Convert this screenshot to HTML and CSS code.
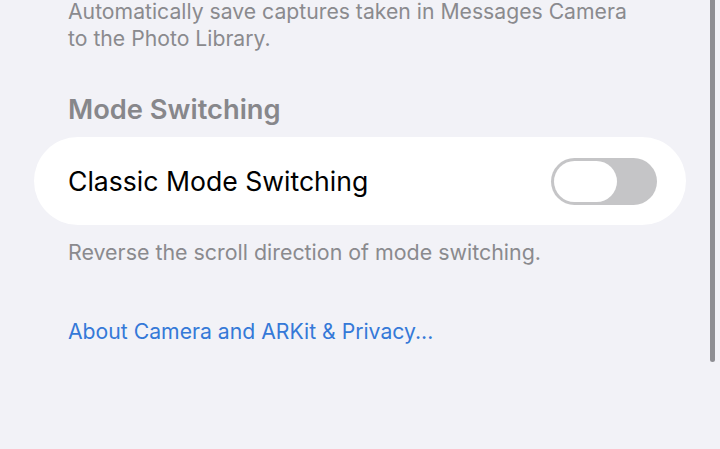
FILE: index.html
```html
<!DOCTYPE html>
<html lang="en">
<head>
<meta charset="utf-8">
<link rel="stylesheet" href="styles.css">
</head>
<body>
<div class="page">
  <p class="desc">Automatically save captures taken in Messages Camera<br>to the Photo Library.</p>
  <h2 class="section-title">Mode Switching</h2>
  <div class="card">
    <span class="row-label">Classic Mode Switching</span>
    <span class="toggle"><span class="knob"></span></span>
  </div>
  <p class="footer">Reverse the scroll direction of mode switching.</p>
  <a class="link" href="#">About Camera and ARKit &amp; Privacy...</a>
</div>
<div class="scrollbar"></div>
</body>
</html>
```
FILE: styles.css
```css
html, body {
  margin: 0;
  padding: 0;
  background: #f2f2f7;
  height: 100%;
  overflow: hidden;
}
body {
  font-family: Inter, "Noto Sans", sans-serif;
  position: relative;
}
.page {
  padding: 0 34px;
  display: flex;
  flex-direction: column;
}
.desc {
  margin: -2px 0 0 34px;
  font-size: 21.2px;
  line-height: 27px;
  color: #8a8a8e;
}
.section-title {
  margin: 42px 0 0 34px;
  font-size: 27.3px;
  line-height: 32px;
  font-weight: 600;
  color: #87878b;
}
.card {
  margin-top: 11px;
  height: 88px;
  background: #ffffff;
  border-radius: 44px;
  display: flex;
  align-items: center;
  justify-content: space-between;
  padding: 0 29px 0 34px;
}
.row-label {
  font-size: 26.6px;
  color: #000;
}
.toggle {
  width: 106px;
  height: 47px;
  border-radius: 24px;
  background: #c5c5c7;
  display: flex;
  align-items: center;
  padding-left: 3px;
  box-sizing: border-box;
}
.knob {
  width: 63px;
  height: 41px;
  border-radius: 21px;
  background: #ffffff;
}
.footer {
  margin: 13px 0 0 34px;
  font-size: 21.4px;
  line-height: 28px;
  color: #8a8a8e;
}
.link {
  margin: 51px 0 0 34px;
  font-size: 21.2px;
  line-height: 28px;
  color: #3579d8;
  text-decoration: none;
}
.scrollbar {
  position: absolute;
  left: 710px;
  top: -6px;
  width: 5px;
  height: 368px;
  border-radius: 3px;
  background: #8e8e93;
}
```
